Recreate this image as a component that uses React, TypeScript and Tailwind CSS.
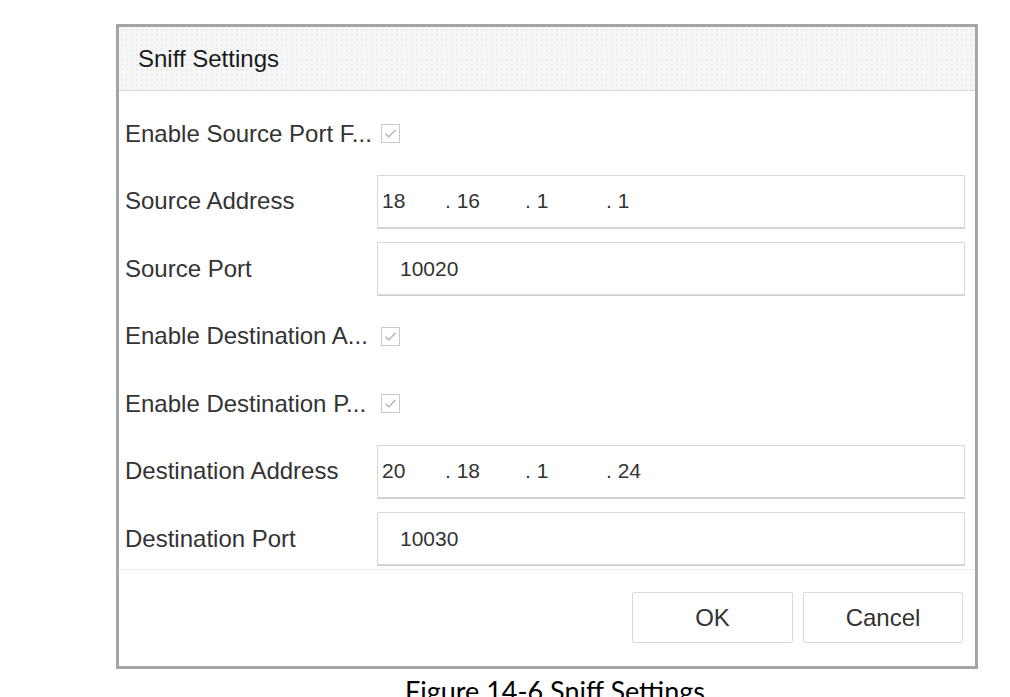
import React from "react";

const CheckBox = () => (
  <div className="ml-[4px] flex h-[19px] w-[19px] items-center justify-center border border-[#c9c9c9] bg-white">
    <svg width="13" height="11" viewBox="0 0 13 11" fill="none">
      <path d="M1.5 5.8 L4.8 9 L11.5 1.8" stroke="#a8a8a8" strokeWidth="1.2" />
    </svg>
  </div>
);

const CheckRow = ({ label }: { label: string }) => (
  <div className="flex h-[53px] items-center">
    <div className="w-[252px] whitespace-nowrap text-[#333]">{label}</div>
    <CheckBox />
  </div>
);

const AddressRow = ({ label, octets }: { label: string; octets: string[] }) => (
  <div className="flex h-[53px] items-center">
    <div className="w-[252px] whitespace-nowrap text-[#333]">{label}</div>
    <div className="flex h-[53px] flex-1 items-center border border-[#d8d8d8] pl-[4px] text-[21px] text-[#333] shadow-[0_1px_0_#cfcfcf]">
      <span className="w-[63px]">{octets[0]}</span>
      <span className="w-[80px]">. {octets[1]}</span>
      <span className="w-[81px]">. {octets[2]}</span>
      <span>. {octets[3]}</span>
    </div>
  </div>
);

const PortRow = ({ label, value }: { label: string; value: string }) => (
  <div className="flex h-[53px] items-center">
    <div className="w-[252px] whitespace-nowrap text-[#333]">{label}</div>
    <div className="flex h-[53px] flex-1 items-center border border-[#d8d8d8] pl-[22px] text-[21px] text-[#333] shadow-[0_1px_0_#cfcfcf]">
      {value}
    </div>
  </div>
);

export default function App() {
  return (
    <div className="h-[697px] w-[1010px] overflow-hidden bg-white pl-[116px] pt-[24px] font-['Liberation_Sans',Arial,sans-serif] text-[24px]">
      <div className="flex h-[645px] w-[862px] flex-col border-[3px] border-[#a5a5a5] bg-white">
        {/* header */}
        <div className="flex h-[64px] items-center border-b border-[#dcdcdc] bg-[#f6f6f6] bg-[radial-gradient(#e9e9e9_1px,transparent_1px)] bg-[length:5px_5px] pl-[19px] text-[#1a1a1a]">
          Sniff Settings
        </div>

        {/* body */}
        <div className="flex flex-col gap-[14.5px] pb-[4px] pl-[6px] pr-[10px] pt-[16px]">
          <CheckRow label="Enable Source Port F..." />
          <AddressRow label="Source Address" octets={["18", "16", "1", "1"]} />
          <PortRow label="Source Port" value="10020" />
          <CheckRow label="Enable Destination A..." />
          <CheckRow label="Enable Destination P..." />
          <AddressRow label="Destination Address" octets={["20", "18", "1", "24"]} />
          <PortRow label="Destination Port" value="10030" />
        </div>

        {/* footer */}
        <div className="flex flex-1 justify-end gap-[10px] border-t border-[#ececec] pr-[12px] pt-[22px]">
          <button className="h-[51px] w-[161px] rounded-[2px] border border-[#d9d9d9] bg-white text-[24px] text-[#333]">
            OK
          </button>
          <button className="h-[51px] w-[160px] rounded-[2px] border border-[#d9d9d9] bg-white text-[24px] text-[#333]">
            Cancel
          </button>
        </div>
      </div>

      {/* caption */}
      <div className="flex w-[878px] justify-center pt-[4px] font-['Lato',sans-serif] text-[27px] leading-[36px] text-black">
        Figure 14-6 Sniff Settings
      </div>
    </div>
  );
}
